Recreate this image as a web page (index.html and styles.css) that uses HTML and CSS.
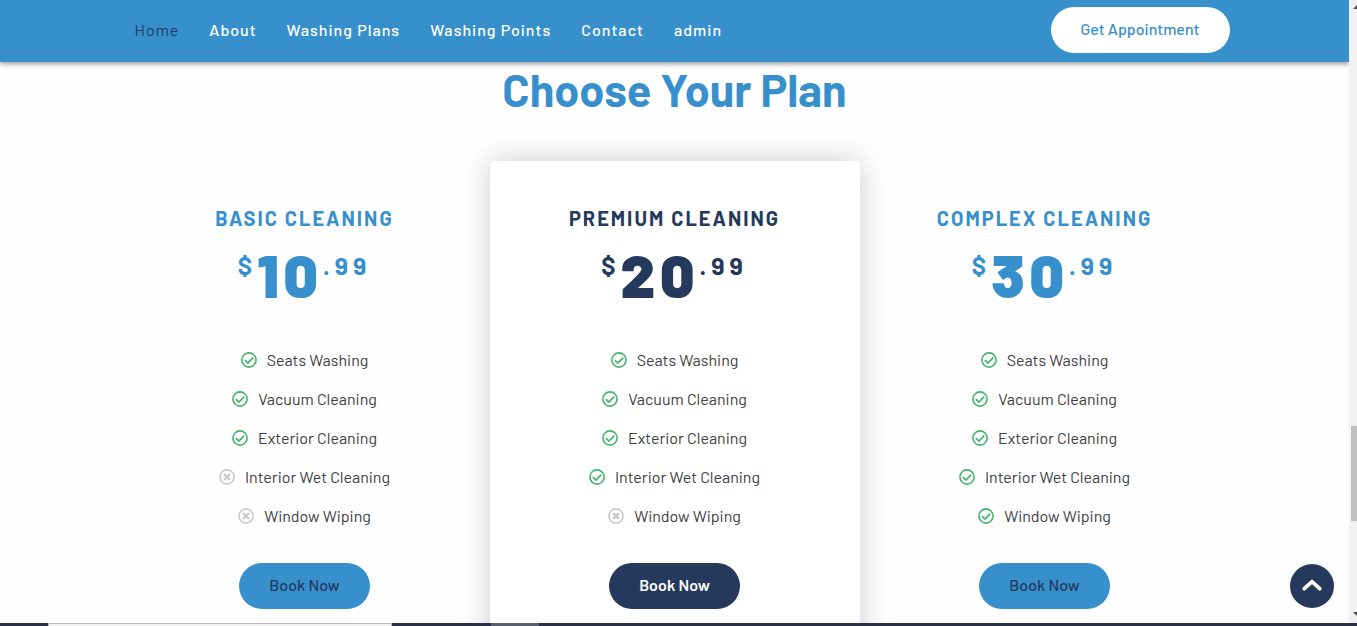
FILE: index.html
```
<!DOCTYPE html>
<html lang="en">
<head>
    <meta charset="UTF-8">
    <meta name="viewport" content="width=device-width, initial-scale=1.0">
    <title>Washing Plans</title>
    <link rel="stylesheet" href="styles.css">
</head>
<body>
    <!-- Shared icons -->
    <svg class="sprite" aria-hidden="true">
        <symbol id="check" viewBox="0 0 16 16">
            <circle cx="8" cy="8" r="7.1" fill="none" stroke="currentColor" stroke-width="1.6"/>
            <path d="M3.9 8.2 6.9 11.1l5.3-5.5" fill="none" stroke="currentColor" stroke-width="1.7"/>
        </symbol>
        <symbol id="cross" viewBox="0 0 16 16">
            <circle cx="8" cy="8" r="7.1" fill="none" stroke="currentColor" stroke-width="1.7"/>
            <path d="m5.1 5.1 5.8 5.8m0-5.8-5.8 5.8" fill="none" stroke="currentColor" stroke-width="2.2"/>
        </symbol>
    </svg>

    <div class="window">
        <div class="page">
            <header class="nav-bar">
                <div class="container nav-inner">
                    <nav class="nav-links">
                        <a href="#" class="active">Home</a>
                        <a href="#">About</a>
                        <a href="#">Washing Plans</a>
                        <a href="#">Washing Points</a>
                        <a href="#">Contact</a>
                        <a href="#">admin</a>
                    </nav>
                    <a href="#" class="btn btn-light">Get Appointment</a>
                </div>
            </header>

            <main class="plans">
                <h2>Choose Your Plan</h2>
                <div class="container plan-row">
                    <div class="plan">
                        <h3>Basic Cleaning</h3>
                        <div class="price"><span>$</span><strong>10</strong><span>.99</span></div>
                        <ul>
                            <li><svg class="yes"><use href="#check"/></svg>Seats Washing</li>
                            <li><svg class="yes"><use href="#check"/></svg>Vacuum Cleaning</li>
                            <li><svg class="yes"><use href="#check"/></svg>Exterior Cleaning</li>
                            <li><svg class="no"><use href="#cross"/></svg>Interior Wet Cleaning</li>
                            <li><svg class="no"><use href="#cross"/></svg>Window Wiping</li>
                        </ul>
                        <a href="#" class="btn">Book Now</a>
                    </div>

                    <div class="plan featured">
                        <h3>Premium Cleaning</h3>
                        <div class="price"><span>$</span><strong>20</strong><span>.99</span></div>
                        <ul>
                            <li><svg class="yes"><use href="#check"/></svg>Seats Washing</li>
                            <li><svg class="yes"><use href="#check"/></svg>Vacuum Cleaning</li>
                            <li><svg class="yes"><use href="#check"/></svg>Exterior Cleaning</li>
                            <li><svg class="yes"><use href="#check"/></svg>Interior Wet Cleaning</li>
                            <li><svg class="no"><use href="#cross"/></svg>Window Wiping</li>
                        </ul>
                        <a href="#" class="btn btn-dark">Book Now</a>
                    </div>

                    <div class="plan">
                        <h3>Complex Cleaning</h3>
                        <div class="price"><span>$</span><strong>30</strong><span>.99</span></div>
                        <ul>
                            <li><svg class="yes"><use href="#check"/></svg>Seats Washing</li>
                            <li><svg class="yes"><use href="#check"/></svg>Vacuum Cleaning</li>
                            <li><svg class="yes"><use href="#check"/></svg>Exterior Cleaning</li>
                            <li><svg class="yes"><use href="#check"/></svg>Interior Wet Cleaning</li>
                            <li><svg class="yes"><use href="#check"/></svg>Window Wiping</li>
                        </ul>
                        <a href="#" class="btn">Book Now</a>
                    </div>
                </div>
            </main>

            <a href="#" class="back-to-top" aria-label="Back to top">
                <svg viewBox="0 0 20 12"><path d="m2.3 9.7 7.7-7 7.7 7" fill="none" stroke="currentColor" stroke-width="3.8" stroke-linecap="round"/></svg>
            </a>
        </div>

        <div class="scrollbar" aria-hidden="true">
            <svg class="arrow" viewBox="0 0 4 4"><path d="M4 0v4H0z"/></svg>
            <div class="track"><div class="thumb"></div></div>
            <svg class="arrow" viewBox="0 0 4 4"><path d="M0 0h4v4z"/></svg>
        </div>
    </div>

    <div class="taskbar" aria-hidden="true">
        <div class="task-search"></div>
        <div class="task-active"></div>
    </div>
</body>
</html>
```

FILE: styles.css
```
* {
    box-sizing: border-box;
}

body {
    margin: 0;
    height: 100vh;
    display: flex;
    flex-direction: column;
    overflow: hidden;
    background-color: #fefefe;
    color: #404043;
    font-family: Barlow, Roboto, sans-serif;
    font-size: 16px;
    line-height: 24px;
}

a {
    text-decoration: none;
}

.sprite {
    display: none;
}

.window {
    display: flex;
    flex: 1;
    min-height: 0;
}

.page {
    position: relative;
    flex: 1;
    overflow: hidden;
}

.container {
    width: 100%;
    max-width: 1140px;
    margin: 0 auto;
    padding: 0 15px;
}

/* Navigation */
.nav-bar {
    position: relative;
    z-index: 2;
    padding: 7px 0 9px;
    background-color: #3790cc;
    box-shadow: 0 2px 5px rgba(0, 0, 0, 0.4);
}

.nav-inner {
    display: flex;
    align-items: center;
    justify-content: space-between;
}

.nav-links {
    display: flex;
    gap: 30px;
    padding-left: 15px;
}

.nav-links a {
    color: #fff;
    font-weight: 500;
    letter-spacing: 1px;
}

.nav-links .active {
    color: #24395f;
    font-weight: 400;
}

.btn {
    display: inline-block;
    padding: 10px 30px 12px;
    border-radius: 23px;
    background-color: #3790cc;
    color: #24395f;
    font-weight: 500;
}

.btn-light {
    background-color: #fff;
    color: #3790cc;
}

.btn-dark {
    background-color: #24395c;
    color: #fff;
    font-weight: 600;
}

/* Plans */
.plans h2 {
    margin: 0;
    padding-bottom: 45px;
    color: #3790cc;
    font-size: 45px;
    font-weight: 700;
    line-height: 54px;
    text-align: center;
}

.plan-row {
    display: grid;
    grid-template-columns: repeat(3, 1fr);
}

.plan {
    padding: 45px 30px;
    border-radius: 5px;
    color: #3790cc;
    text-align: center;
}

.featured {
    background-color: #fff;
    box-shadow: 0 0 30px rgba(0, 0, 0, 0.2);
    color: #24395c;
}

.plan h3 {
    margin: 0 0 14px;
    font-size: 20px;
    font-weight: 700;
    letter-spacing: 2px;
    line-height: 24px;
    text-transform: uppercase;
}

.price {
    display: flex;
    justify-content: center;
    margin-bottom: 36px;
    letter-spacing: 5px;
    line-height: 60px;
}

.price span {
    font-size: 25px;
    font-weight: 700;
    line-height: 42px;
}

.price strong {
    font-size: 60px;
    font-weight: 900;
}

.plan ul {
    margin: 0 0 28px;
    padding: 0;
    list-style: none;
    color: #404043;
}

.plan li {
    display: flex;
    align-items: center;
    justify-content: center;
    gap: 10px;
    height: 39px;
}

.plan li svg {
    width: 16px;
    height: 16px;
}

.yes {
    color: #43b36f;
}

.no {
    color: #cacaca;
}

.back-to-top {
    position: absolute;
    right: 15px;
    bottom: 15px;
    display: flex;
    align-items: center;
    justify-content: center;
    width: 44px;
    height: 44px;
    padding-bottom: 2px;
    border-radius: 50%;
    background-color: #24395c;
    color: #fff;
}

.back-to-top svg {
    width: 20px;
    height: 12px;
}

/* Window edge */
.scrollbar {
    display: flex;
    flex-direction: column;
    align-items: flex-end;
    width: 8px;
    padding: 5px 0 7px;
    background-color: #f1f1f1;
}

.arrow {
    width: 4px;
    height: 4px;
    fill: #505050;
}

.track {
    display: flex;
    flex: 1;
    flex-direction: column;
    justify-content: flex-end;
    width: 6px;
    padding-bottom: 91px;
}

.thumb {
    height: 95px;
    background-color: #c1c1c1;
}

.taskbar {
    display: flex;
    height: 3px;
    background-color: #2b3044;
}

.task-search {
    width: 344px;
    margin-left: 48px;
    border: 1px solid #bbb;
    border-bottom: 0;
    background-color: #f2f2f2;
}

.task-active {
    width: 48px;
    margin-left: 99px;
    background-color: #5b5e6c;
}
```
